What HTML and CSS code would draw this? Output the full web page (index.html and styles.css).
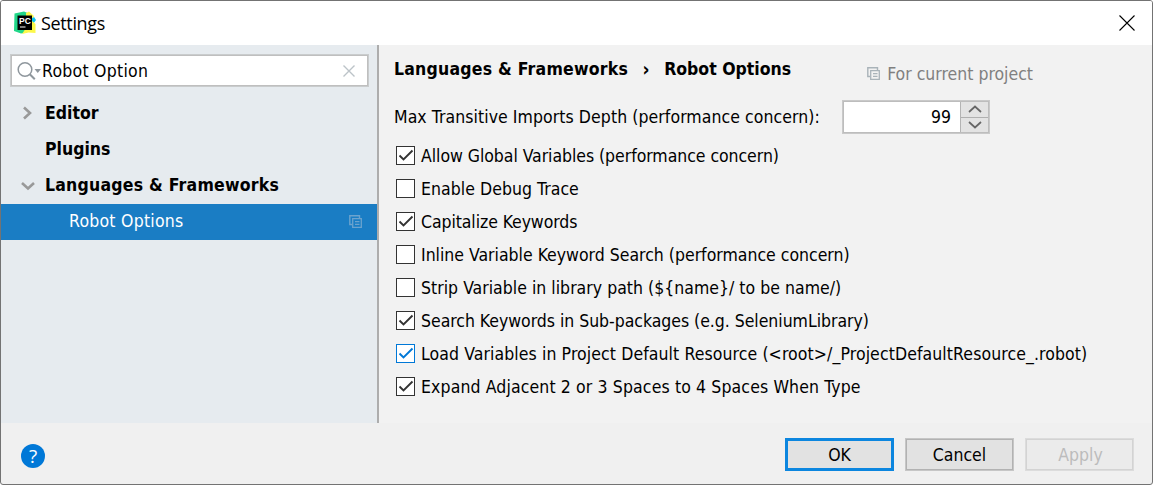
FILE: index.html
```
<!DOCTYPE html>
<html lang="en">
<head>
<meta charset="utf-8">
<title>Settings</title>
<link rel="stylesheet" href="styles.css">
</head>
<body>
<svg width="0" height="0" class="defs" aria-hidden="true">
  <symbol id="copy" viewBox="0 0 13 13"><path d="M3 9.500H.8V.8H10.500V3" fill="none" stroke="currentColor" stroke-width="1.400"/><path d="M3.700 3.700h8.600v8.600H3.700zM6 6.700h4.500M6 9.300h4.500" fill="none" stroke="currentColor" stroke-width="1.300"/></symbol>
  <symbol id="check" viewBox="0 0 19 19"><path d="M3.500 9.500l4 4 9-9" fill="none" stroke="currentColor" stroke-width="1.900"/></symbol>
</svg>
<div class="window">
  <header class="titlebar">
    <svg class="logo" width="24" height="24" viewBox="0 0 24 24">
      <path d="M1.500 2.500L11 .5l7 3-4 18-6 1L1 20z" fill="#21d789"/>
      <path d="M13 2l3-1.500 5 4.500-2 4-6-4z" fill="#fcf84a"/>
      <path d="M18 8l3-2 2 3-3 4z" fill="#07c3f2"/>
      <path d="M19 10l3.500 3v9l-7-.5L9 23l4-6z" fill="#fcf84a"/>
      <path d="M4.500 4.500H19V19H4.500z" fill="#000"/>
      <text class="logo-text" x="6" y="12.500">PC</text>
      <path d="M7 16h5.500" stroke="#fff" stroke-width="1.200"/>
    </svg>
    <span class="title">Settings</span>
    <svg class="close" width="16" height="16" viewBox="0 0 16 16"><path d="M.5.5l15 15M15.500.5l-15 15" stroke="#000" stroke-width="1.100"/></svg>
  </header>
  <div class="content">
    <nav class="sidebar">
      <div class="search">
        <svg width="25" height="22" viewBox="0 0 25 22"><circle cx="8" cy="9.500" r="6.800" fill="none" stroke="#8f979d" stroke-width="1.500"/><path d="M12.800 14.300l5 5" stroke="#8f979d" stroke-width="2"/><path d="M17.500 9h6.500l-3.250 4z" fill="#8f979d"/></svg>
        <span class="query">Robot Option</span>
        <svg class="clear" width="12" height="12" viewBox="0 0 12 12"><path d="M.5.5l11 11M11.500.5l-11 11" stroke="#bcc3c8" stroke-width="1.400"/></svg>
      </div>
      <div class="row group"><svg class="arrow" width="14" height="14" viewBox="0 0 14 14"><path d="M3 1.500l6 5.500-6 5.500" fill="none" stroke="#999" stroke-width="2.600"/></svg><span class="t-editor">Editor</span></div>
      <div class="row group"><span class="arrow"></span><span class="t-plugins">Plugins</span></div>
      <div class="row group"><svg class="arrow" width="14" height="14" viewBox="0 0 14 14"><path d="M1 5l6 5.500L13 5" fill="none" stroke="#999" stroke-width="2.600"/></svg><span class="t-langs">Languages &amp; Frameworks</span></div>
      <div class="row selected"><span class="t-robot">Robot Options</span><svg width="13" height="13"><use href="#copy"/></svg></div>
    </nav>
    <main class="panel">
      <div class="crumbs">
        <span class="t-langs">Languages &amp; Frameworks</span><span class="sep">›</span><span class="t-crumb">Robot Options</span>
        <span class="scope"><svg width="13" height="13"><use href="#copy"/></svg><span class="t-scope">For current project</span></span>
      </div>
      <div class="depth">
        <span class="t-depth">Max Transitive Imports Depth (performance concern):</span>
        <div class="spinner">
          <span class="value">99</span>
          <div class="steps">
            <span class="step"><svg width="14" height="8" viewBox="0 0 14 8"><path d="M1 7l6-5.500L13 7" fill="none" stroke="#666" stroke-width="1.700"/></svg></span>
            <span class="step"><svg width="14" height="8" viewBox="0 0 14 8"><path d="M1 1l6 5.500L13 1" fill="none" stroke="#666" stroke-width="1.700"/></svg></span>
          </div>
        </div>
      </div>
      <div class="options">
        <div class="option"><span class="box"><svg width="19" height="19"><use href="#check"/></svg></span><span class="o1">Allow Global Variables (performance concern)</span></div>
        <div class="option"><span class="box"></span><span class="o2">Enable Debug Trace</span></div>
        <div class="option"><span class="box"><svg width="19" height="19"><use href="#check"/></svg></span><span class="o3">Capitalize Keywords</span></div>
        <div class="option"><span class="box"></span><span class="o4">Inline Variable Keyword Search (performance concern)</span></div>
        <div class="option"><span class="box"></span><span class="o5">Strip Variable in library path (${name}/ to be name/)</span></div>
        <div class="option"><span class="box"><svg width="19" height="19"><use href="#check"/></svg></span><span class="o6">Search Keywords in Sub-packages (e.g. SeleniumLibrary)</span></div>
        <div class="option"><span class="box active"><svg width="19" height="19"><use href="#check"/></svg></span><span class="o7">Load Variables in Project Default Resource (&lt;root&gt;/_ProjectDefaultResource_.robot)</span></div>
        <div class="option"><span class="box"><svg width="19" height="19"><use href="#check"/></svg></span><span class="o8">Expand Adjacent 2 or 3 Spaces to 4 Spaces When Type</span></div>
      </div>
    </main>
  </div>
  <footer class="footer">
    <span class="help">?</span>
    <span class="button primary">OK</span>
    <span class="button">Cancel</span>
    <span class="button disabled">Apply</span>
  </footer>
</div>
</body>
</html>
```
FILE: styles.css
```
* { box-sizing: border-box; }
body { margin: 0; background: #fff; font: 17.5px/24px "DejaVu Sans Condensed", "DejaVu Sans", sans-serif; font-stretch: condensed; color: #000; white-space: nowrap; overflow: hidden; }
svg { display: block; flex: none; }
.defs { position: absolute; }
.window { width: 1153px; height: 485px; border: 1px solid #737373; border-radius: 3px; display: flex; flex-direction: column; overflow: hidden; background: #f0f0f0; }
.titlebar { height: 44px; flex: none; background: #fff; display: flex; align-items: center; padding: 0 17px 0 12px; }
.logo { margin-top: -1px; }
.title { font-family: "Open Sans", sans-serif; font-stretch: normal; font-size: 18px; letter-spacing: -.35px; margin-left: 4px; }
.close { margin-left: auto; }
.logo-text { font: bold 8.5px "Liberation Sans", sans-serif; fill: #fff; }
.content { height: 378px; flex: none; display: flex; }
.sidebar { width: 376px; background: #e6ebef; padding-top: 9px; }
.search { margin: 0 8px 8px 9px; height: 33px; border: 1px solid #c9cccd; box-shadow: inset 0 0 0 1px #bfbfbf; background: #fff; display: flex; align-items: center; padding: 0 13px 0 6px; }
.query { letter-spacing: .25px; }
.clear { margin-left: auto; }
.row { height: 36px; display: flex; align-items: center; }
.group { font-weight: bold; padding-left: 20px; }
.arrow { width: 14px; margin-right: 10px; }
.selected { margin-top: 1px; background: #1a7dc4; color: #fff; padding: 0 15px 2px 68px; justify-content: space-between; }
.selected svg { color: #6ba3ce; margin-top: 1px; }
.t-langs { letter-spacing: .23px; }
.t-robot { letter-spacing: .24px; }
.panel { flex: 1; border-left: 2px solid #adadad; background: #f2f2f2; padding-left: 15px; }
.crumbs { height: 48px; display: flex; align-items: center; font-weight: bold; }
.sep { width: 36px; text-align: center; font-size: 19px; }
.scope { margin: 10px 0 0 76px; display: flex; align-items: center; gap: 7px; font-weight: normal; color: #808080; }
.scope svg { color: #a9b3b9; margin-top: -2px; }
.depth { display: flex; align-items: center; margin-top: 7px; height: 34px; }
.t-depth { width: 448px; letter-spacing: .07px; }
.spinner { width: 148px; height: 34px; border: 1px solid #c9c9c9; box-shadow: inset 0 0 0 1px #bdbdbd; padding: 1px; background: #fff; display: flex; }
.value { flex: 1; text-align: right; line-height: 30px; padding-right: 9px; }
.steps { width: 28px; border-left: 1px solid #b4b4b4; display: flex; flex-direction: column; }
.step { flex: 1; background: #e3e3e3; display: flex; align-items: center; justify-content: center; }
.step + .step { border-top: 1px solid #b0b0b0; }
.options { margin-top: 5px; padding-left: 2px; }
.option { height: 33px; display: flex; align-items: center; gap: 6px; }
.o1 { letter-spacing: -.045px; }
.o2 { letter-spacing: .05px; }
.o3 { letter-spacing: -.08px; }
.o5 { letter-spacing: .02px; }
.o6 { letter-spacing: -.03px; }
.o7 { letter-spacing: .095px; }
.o8 { letter-spacing: .125px; }
.box { width: 19px; height: 19px; border: 1px solid #333; background: #fff; color: #333; flex: none; }
.box svg { margin: -1px; }
.active { border-color: #0078d7; color: #0078d7; }
.footer { flex: 1; display: flex; align-items: flex-start; padding: 15px 18px 0 20px; gap: 11px; }
.help { width: 24px; height: 24px; margin: 6px auto 0 0; border-radius: 50%; background: #0078d7; color: #fff; text-align: center; font: 19px/24px "Open Sans", sans-serif; }
.button { width: 109px; height: 33px; border: 1px solid #c6c6c6; box-shadow: inset 0 0 0 1px #b2b2b2; background: #e2e2e2; text-align: center; line-height: 32px; }
.primary { border: 3px solid #0c86df; box-shadow: none; line-height: 28px; }
.disabled { border-color: #dcdcdc; box-shadow: inset 0 0 0 1px #d3d3d3; background: #ebebeb; color: #bcbcbc; padding-left: 2px; }
```
